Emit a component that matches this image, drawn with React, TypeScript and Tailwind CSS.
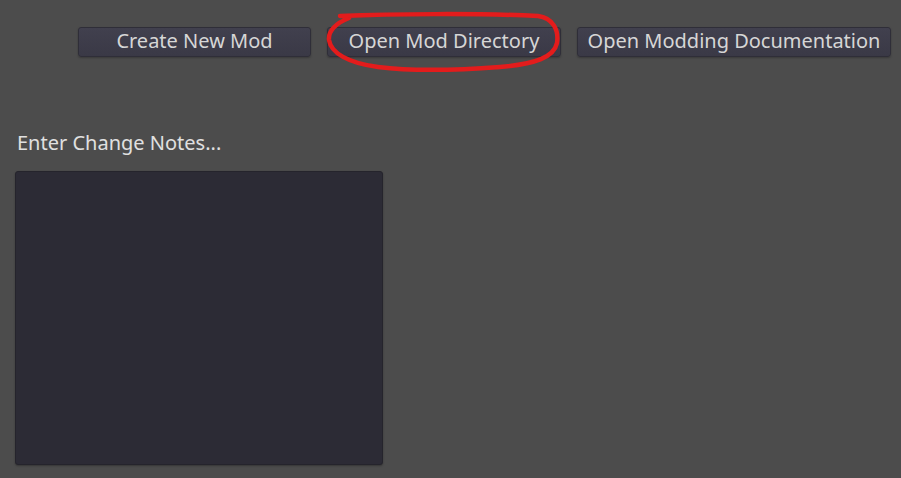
import React from "react";

const font = { fontFamily: '"Noto Sans", "Open Sans", sans-serif' };

function GodotButton({ label, className = "" }: { label: string; className?: string }) {
  return (
    <button
      type="button"
      className={`h-[30px] rounded-[3px] border border-[#2f2e38] bg-gradient-to-b from-[#41404e] to-[#3a3946] pb-[3px] text-[20px] leading-none text-[#d6d6d6] shadow-[0_1px_2px_rgba(0,0,0,0.25)] ${className}`}
    >
      {label}
    </button>
  );
}

export default function App() {
  return (
    <div className="relative h-[478px] w-[901px] overflow-hidden bg-[#4c4c4c]" style={font}>
      <div className="flex gap-[16px] pl-[78px] pt-[27px]">
        <GodotButton label="Create New Mod" className="w-[233px]" />
        <GodotButton label="Open Mod Directory" className="w-[234px]" />
        <GodotButton label="Open Modding Documentation" className="w-[314px]" />
      </div>

      <div className="pl-[17px] pt-[74px] text-[20px] leading-[24px] text-[#e0e0e0]">Enter Change Notes...</div>

      <div className="ml-[15px] mt-[16px] h-[294px] w-[368px] rounded-[3px] border border-[#25242c] bg-[#2c2b35] shadow-[0_1px_2px_rgba(0,0,0,0.3)]" />

      {/* red annotation scribble */}
      <svg className="pointer-events-none absolute left-0 top-0" width="901" height="478" viewBox="0 0 901 478">
        <path
          d="M340 16 C 390 14, 480 13, 538 16 C 553 18, 559 30, 557 43 C 554 57, 536 64, 500 67 C 460 70, 410 71, 378 67 C 348 63, 331 53, 329 40 C 328 31, 336 23, 349 18"
          fill="none"
          stroke="#e31c1c"
          strokeWidth="4.5"
          strokeLinecap="round"
        />
      </svg>
    </div>
  );
}
